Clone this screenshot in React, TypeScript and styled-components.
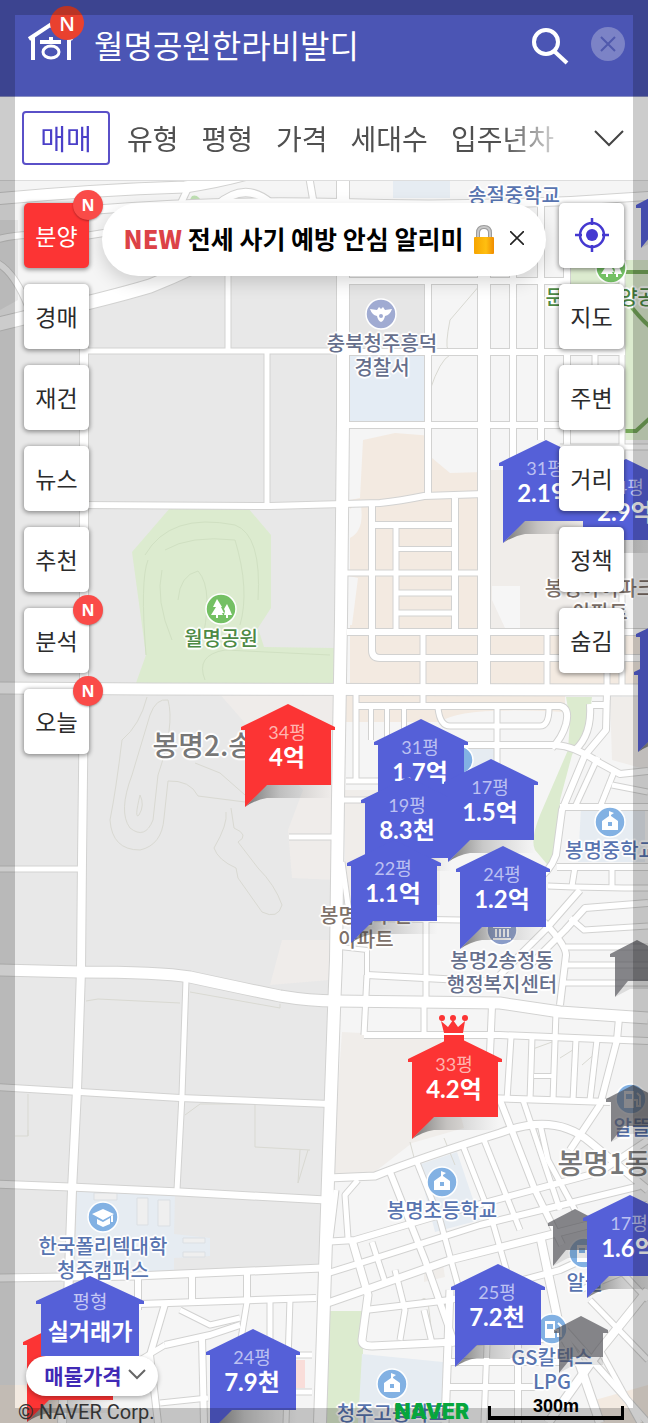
import React from "react";
import styled, { createGlobalStyle, css } from "styled-components";

const GlobalStyle = createGlobalStyle`
  * { box-sizing: border-box; }
  body { margin: 0; background: #e8e8e8; }
  button, input { font: inherit; color: inherit; border: 0; background: none; padding: 0; margin: 0; }
  button { cursor: pointer; }
`;

const Page = styled.div`
  position: relative;
  display: flex;
  flex-direction: column;
  min-height: 100vh;
  overflow: hidden;
  font-family: "Noto Sans CJK KR", sans-serif;
`;

const Header = styled.header`
  display: flex;
  align-items: center;
  height: 97px;
  padding: 0 23px 8px 28px;
  background: #4b55b4;
  border-bottom: 1px solid #8b90c4;
  color: #fff;
`;

const Logo = styled.a`
  position: relative;
  display: block;
  width: 46px;
  height: 60px;
  margin-right: 20px;
  svg { display: block; margin-top: 14px; overflow: visible; }
`;

const Badge = styled.span<{ $large?: boolean }>`
  position: absolute;
  display: flex;
  align-items: center;
  justify-content: center;
  border-radius: 50%;
  color: #fff;
  line-height: 1;
  ${(p) =>
    p.$large
      ? css`
          top: -8px;
          left: 22px;
          width: 34px;
          height: 34px;
          background: #e9412f;
          font: 600 20px "Open Sans", sans-serif;
        `
      : css`
          top: -13px;
          right: -14px;
          width: 30px;
          height: 30px;
          background: #fa4b48;
          font: 700 16px "Open Sans", sans-serif;
          box-shadow: 0 1px 2px rgba(0, 0, 0, 0.3);
        `}
`;

const SearchField = styled.input`
  flex: 1;
  min-width: 0;
  height: 48px;
  font-size: 32px;
  line-height: 48px;
  outline: none;
`;

const SearchButton = styled.button`
  display: flex;
  margin: 3px 22px 0 0;
`;

const ClearButton = styled.button`
  display: flex;
  align-items: center;
  justify-content: center;
  width: 34px;
  height: 34px;
  border-radius: 50%;
  background: #7c83c6;
`;

const FilterBar = styled.nav`
  display: flex;
  align-items: center;
  height: 84px;
  padding: 0 24px 2px 22px;
  background: #fff;
  border-bottom: 1px solid #ddd;
`;

const FilterList = styled.div`
  display: flex;
  align-items: center;
  flex: 1;
  gap: 23px;
  min-width: 0;
  margin-right: 38px;
  overflow: hidden;
  mask-image: linear-gradient(to right, #000 90%, transparent 103%);
`;

const Filter = styled.button<{ $active?: boolean }>`
  flex: none;
  height: 54px;
  font-size: 28px;
  line-height: 50px;
  color: #505050;
  ${(p) =>
    p.$active &&
    css`
      width: 88px;
      margin-right: -6px;
      color: #4a3fc8;
      border: 2px solid #5a50c8;
      border-radius: 4px;
    `}
`;

const IconButton = styled.button`
  display: flex;
`;

const MapArea = styled.main`
  position: relative;
  flex: 1;
  min-height: 1200px;
  overflow: hidden;
  background: #f5f5f5;
`;

const MapDrawing = styled.svg`
  position: absolute;
  inset: 0;
  width: 100%;
  height: 100%;
`;

const Controls = styled.div`
  position: relative;
  z-index: 2;
  display: flex;
  align-items: flex-start;
  padding: 22px 24px 0;
`;

const ControlColumn = styled.div`
  display: flex;
  flex-direction: column;
  gap: 16px;
`;

const ControlButton = styled.button<{ $hot?: boolean }>`
  position: relative;
  display: flex;
  align-items: center;
  justify-content: center;
  width: 65px;
  height: 65px;
  padding-bottom: 2px;
  border-radius: 5px;
  font-size: 23px;
  background: ${(p) => (p.$hot ? "#fc3434" : "#fff")};
  color: ${(p) => (p.$hot ? "#fff" : "#2b2b2b")};
  box-shadow: 0 1px 4px 1px rgba(0, 0, 0, 0.38);
`;

const Notice = styled.section`
  display: flex;
  align-items: center;
  justify-content: center;
  flex: 1;
  height: 73px;
  margin: 0 13px;
  padding-bottom: 4px;
  border-radius: 37px;
  background: #fff;
  color: #000;
  font-size: 25px;
  font-weight: 700;
  white-space: nowrap;
  box-shadow: 0 6px 18px rgba(0, 0, 0, 0.16);
  svg { flex: none; }
`;

const NoticeTag = styled.strong`
  margin-right: 6px;
  color: #dc4247;
`;

const LockIcon = styled.svg`
  margin: 4px 14px 0 9px;
`;

/* The map drawing starts at this row of the shared coordinate system. */
const ORIGIN_Y = 181;

const Pin = styled.button<{ $x: number; $y: number; $small?: boolean }>`
  position: absolute;
  left: ${(p) => p.$x - (p.$small ? 27 : 47)}px;
  top: ${(p) => p.$y - ORIGIN_Y}px;
  width: ${(p) => (p.$small ? 54 : 94)}px;
  height: ${(p) => (p.$small ? 58 : 104)}px;
  padding: 18px 2px 0 0;
  display: flex;
  flex-direction: column;
  align-items: center;
  color: #fff;
  font-family: Lato, "Noto Sans CJK KR", sans-serif;
  white-space: nowrap;
  svg { position: absolute; left: 0; top: 0; overflow: visible; }
`;

const PinArea = styled.span<{ $red?: boolean }>`
  position: relative;
  font-size: 18px;
  line-height: 20px;
  color: ${(p) => (p.$red ? "#ffb4b0" : "#bcc0f2")};
`;

const PinPrice = styled.span`
  position: relative;
  font-size: 24px;
  line-height: 30px;
  font-weight: 700;
`;

const Place = styled.span<{ $x: number; $y: number; $color: string; $big?: boolean }>`
  position: absolute;
  left: ${(p) => p.$x}px;
  top: ${(p) => p.$y - ORIGIN_Y}px;
  transform: translateX(-50%);
  text-align: center;
  white-space: pre;
  font-weight: 500;
  font-size: ${(p) => (p.$big ? 28 : 20)}px;
  line-height: ${(p) => (p.$big ? 32 : 24)}px;
  color: ${(p) => p.$color};
  text-shadow: 1px 1px 1px #fff, -1px -1px 1px #fff, 1px -1px 1px #fff, -1px 1px 1px #fff,
    0 2px 1px #fff, 0 -2px 1px #fff, 2px 0 1px #fff, -2px 0 1px #fff;
`;

const Legend = styled.div`
  position: absolute;
  z-index: 2;
  left: 26px;
  bottom: 27px;
  display: flex;
  flex-direction: column;
  align-items: center;
  width: 132px;
`;

const LegendHouse = styled.div`
  position: relative;
  display: flex;
  flex-direction: column;
  align-items: center;
  width: 108px;
  height: 80px;
  padding-top: 14px;
  margin-right: 4px;
  color: #fff;
  svg { position: absolute; left: 0; top: 0; }
`;

const LegendArea = styled.span`
  position: relative;
  font-size: 19px;
  line-height: 22px;
  color: #c4c7f4;
`;

const LegendPrice = styled.span`
  position: relative;
  font-size: 23px;
  line-height: 36px;
  font-weight: 700;
`;

const PriceToggle = styled.button`
  display: flex;
  align-items: center;
  justify-content: center;
  gap: 6px;
  width: 132px;
  height: 40px;
  padding: 0 6px 2px 12px;
  border-radius: 20px;
  background: #fff;
  color: #4029b5;
  font-size: 21px;
  font-weight: 700;
  box-shadow: 0 2px 5px rgba(0, 0, 0, 0.3);
`;

const Attribution = styled.footer`
  position: absolute;
  z-index: 5;
  left: 18px;
  right: 24px;
  bottom: 0;
  display: flex;
  align-items: flex-end;
`;

const Copyright = styled.small`
  flex: 1;
  font: 400 20px/22px Roboto, sans-serif;
  color: #333;
`;

const NaverLogo = styled.span`
  margin-right: 19px;
  font: 900 21px/23px Inter, sans-serif;
  color: #07a63c;
`;

const ScaleBar = styled.div`
  width: 136px;
  height: 26px;
  margin-bottom: 3px;
  padding-top: 2px;
  text-align: center;
  font: 700 18px/20px "Liberation Sans", sans-serif;
  color: #000;
  background: linear-gradient(#000, #000) left bottom / 3px 14px no-repeat,
    linear-gradient(#000, #000) right bottom / 3px 14px no-repeat,
    linear-gradient(#000, #000) left bottom / 100% 4px no-repeat;
`;

const EdgeShade = styled.div`
  position: absolute;
  inset: 0;
  z-index: 3;
  border: 15px solid rgba(0, 0, 0, 0.2);
  pointer-events: none;
`;

type Road = [string, number];

const roads: Road[] = [
  ["M343 170 L343 420 L341 620 L338 800 L336 960 L334 1010 L328 1180 L320 1423", 12],
  ["M84 300 V690 L82 860 L81 970 L77 1090 L72 1190 L68 1300 L62 1423", 8],
  ["M80 351 H340", 5], ["M80 505 L270 506 L380 503 Q400 501 424 496 L484 494", 6],
  ["M228 230 V350", 5], ["M267 352 V505", 5],
  ["M-5 688 L150 689 L648 690", 11],
  ["M-5 325 L40 314 Q110 298 150 286 Q210 262 245 238", 13],
  ["M-5 199 Q90 190 185 187 Q230 180 260 170", 11],
  ["M90 210 Q210 200 340 203 Q500 208 660 195", 8],
  ["M190 184 L180 205", 6], ["M216 206 Q245 180 272 204", 7], ["M308 170 L314 205", 6],
  ["M-5 240 Q30 230 60 240 L110 232 Q140 225 160 230", 6], ["M-5 262 Q15 270 32 316", 6],
  ["M346 281 H566", 6], ["M346 352 H484", 6], ["M484 352 H625", 6], ["M346 425 H566", 6], ["M560 447 H648", 5],
  ["M428 283 V496", 6], ["M484 205 L484 690", 12], ["M513 205 V470", 6], ["M541 205 V440", 6],
  ["M567 205 V447", 6], ["M595 352 V380", 5], ["M622 250 V690", 5],
  ["M372 505 V650 Q372 658 380 658 L648 658", 6], ["M374 525 H455", 6], ["M396 525 V632", 5],
  ["M455 498 V632", 6], ["M396 549 H455", 4], ["M347 573 H484", 5], ["M396 593 H455", 5], ["M396 613 H455", 5],
  ["M347 632 H648", 6], ["M423 632 V708", 5], ["M547 632 V690", 5], ["M607 658 V700", 5],
  ["M356 692 V782", 5], ["M356 706 H560 Q570 708 566 724 Q562 738 552 748", 6],
  ["M371 708 V740", 4], ["M387 708 V740", 4], ["M404 708 V740", 4], ["M438 708 Q440 726 450 726 H540 Q549 726 549 708", 5],
  ["M497 706 V775", 5], ["M460 745 H555 Q575 746 598 762 L620 774 L648 771", 6],
  ["M607 690 L606 730 L585 755 L562 810 L556 855 Q550 872 534 882 L500 905", 6],
  ["M592 705 L606 705", 6], ["M590 704 Q592 735 575 750", 6],
  ["M346 781 H385", 5], ["M340 800 H375", 5], ["M289 837 H336", 5],
  ["M560 807 H648", 6], ["M598 757 L575 807", 5], ["M614 772 L600 807", 5], ["M612 785 L648 792", 5],
  ["M557 867 H648", 6], ["M612 867 V888", 5], ["M548 886 Q600 888 648 888", 5], ["M575 867 L572 886", 5],
  ["M530 965 L565 930 L585 908 L648 903", 6], ["M500 975 L545 930 L580 890", 6],
  ["M570 918 L584 930 L648 926", 5], ["M544 922 Q566 945 566 955 L560 1005", 6],
  ["M566 947 H648", 5], ["M566 965 H648", 5], ["M562 983 H648", 5],
  ["M338 918 L460 920", 5], ["M426 908 V1005", 5], ["M367 975 L500 982", 6], ["M367 975 L364 1035", 5],
  ["M340 947 L367 950 V975", 4], ["M342 862 L350 920", 5],
  ["M-5 970 L80 972 Q160 972 190 977 Q250 990 280 996 Q310 1001 336 1001 L500 1003 L560 1012 L648 1018", 11],
  ["M-5 869 H80", 5], ["M186 980 L182 1095 L177 1190", 5],
  ["M-5 1087 L80 1092 L180 1098 L330 1104", 6], ["M-5 1184 L70 1187 L180 1192 L326 1200", 7],
  ["M-5 1278 L135 1276 L322 1268", 7],
  ["M364 1035 L500 1035 L648 1041", 6], ["M424 1006 V1035", 5], ["M492 1006 L488 1100", 6],
  ["M556 1012 L553 1100", 5], ["M619 1018 L617 1040 L600 1105 L570 1150", 6],
  ["M511 1037 L507 1100", 5], ["M532 1037 L530 1100", 5], ["M576 1039 L573 1100", 5], ["M597 1040 L590 1100", 5],
  ["M534 1076 H553", 4], ["M485 1098 L610 1102", 6],
  ["M328 1178 L375 1176 Q420 1158 500 1133 Q555 1112 590 1142 L648 1190", 7],
  ["M500 1100 L535 1190 L562 1245", 6], ["M523 1100 L560 1210", 5], ["M463 1146 L492 1220 L515 1300", 5],
  ["M484 1140 L520 1230", 5], ["M540 1124 L548 1160 L575 1210", 5], ["M416 1160 L440 1220 L462 1300", 5],
  ["M390 1172 L425 1260 L455 1345", 6], ["M358 1180 L345 1195 L348 1238", 5], ["M336 1190 L330 1240", 5],
  ["M322 1242 L355 1240 L440 1215 L600 1172 L648 1140", 6],
  ["M322 1275 L370 1260 L480 1225 L640 1186", 6], ["M322 1305 L365 1290 L450 1260 L600 1222 L648 1205", 7],
  ["M352 1240 L368 1295 L362 1340 Q362 1346 372 1346 L455 1342 L560 1338", 7],
  ["M372 1242 L386 1285", 5], ["M395 1270 L405 1310 L400 1340", 5], ["M365 1310 L450 1300 L560 1270 L648 1230", 6],
  ["M424 1310 L432 1343", 5], ["M450 1290 L445 1423", 7], ["M487 1345 L484 1423", 5], ["M518 1342 V1423", 6],
  ["M448 1362 H560", 6], ["M445 1387 H540", 6], ["M540 1235 L560 1330 L580 1365 L600 1423", 8],
  ["M648 1290 L600 1350 L548 1423", 8], ["M565 1330 L648 1423", 6], ["M590 1300 L648 1360", 5],
  ["M620 1270 L648 1300", 5], ["M580 1290 L648 1262", 5], ["M600 1350 L640 1423", 5],
  ["M138 1278 V1310", 6], ["M192 1276 V1300", 6], ["M247 1274 V1302", 6], ["M140 1304 L316 1298", 6],
  ["M247 1302 L240 1345", 5], ["M270 1300 V1360", 5], ["M290 1299 L286 1423", 5],
  ["M165 1304 L150 1355 L158 1423", 6], ["M165 1345 L210 1335 L240 1325", 6], ["M180 1310 L210 1325 L240 1318", 5],
  ["M202 1338 L204 1423", 6], ["M140 1360 L165 1345", 5], ["M160 1403 L208 1398", 5], ["M286 1355 H312", 5], ["M286 1392 H312", 5],
];

const contours = [
  "M147 697 Q140 725 122 740 Q116 790 110 820 Q112 850 140 850 Q162 845 164 818 L168 781 Q190 780 198 796 L245 802",
  "M168 700 Q156 698 150 715 L132 775 Q118 812 130 828 Q145 840 153 820 L158 775 Q175 725 168 700",
  "M226 812 Q228 824 214 848 Q218 860 236 868 L238 878 L262 912 Q278 920 282 905 Q275 885 258 868 L238 842 Q250 835 234 828 L231 808",
  "M140 795 Q134 820 139 815 Q145 805 140 795",
  "M195 763 L220 773 L245 795", "M86 1001 L98 999 L180 1003",
  "M190 992 L280 1008 V1004", "M28 1130 V1136 V1094 M15 1136 H28", "M185 1115 L200 1104 H255 V1147 L310 1150",
  "M300 1150 L298 1183 L308 1150",
  "M480 285 L450 320 Q445 345 448 350", "M430 390 Q440 360 450 355",
  "M530 1050 L552 1042 M560 1058 L576 1048 M582 1065 L597 1052", "M410 1142 L418 1173 M444 1138 L455 1165",
  "M420 1302 Q424 1295 428 1302 L432 1335",
];

const parkContours = [
  "M148 560 Q140 580 146 655 M145 555 Q170 512 235 525 Q262 535 258 600",
  "M165 550 Q190 535 235 540 Q250 590 240 625 M178 600 Q180 575 198 571 Q215 590 200 650 M162 570 Q155 600 172 640",
  "M205 680 Q195 655 225 650 L330 655",
];

function MapBackground() {
  return (
    <MapDrawing aria-hidden="true">
      <g transform={`translate(0 ${-ORIGIN_Y})`}>
        <path fill="#e8e8e8" d="M-5 322 Q130 295 200 262 L228 240 H340 V690 L336 1000 L322 1272 L100 1278 L90 1423 H-5Z" />
        <path fill="#efecea" d="M218 692 H336 L330 980 L270 985 L282 940 H336 V880 L292 878 L288 830 L303 790 Z" />
        <path fill="#e8e8e8" d="M0 310 V220 H18 V300 Z" />
        <rect x="350" y="285" width="75" height="64" fill="#e6e6e6" />
        <rect x="350" y="355" width="75" height="67" fill="#e4ecf4" />
        <path fill="#f3eae1" d="M363 440 L395 433 L484 440 V690 H350 V500 L360 498Z" />
        <path fill="#f5f5f5" d="M432 430 H484 V472 L450 473 L432 458Z M349 576 L358 578 L352 625 H349Z M349 510 L360 500 Q366 530 350 538Z" />
        <path fill="#f0edea" d="M490 470 H620 V630 H490Z M610 697 H648 V770 L612 760Z M345 790 H440 V905 H345Z" />
        <path fill="#f6f6f6" d="M492 586 H520 V628 H505 L492 600Z" />
        <path fill="#f3eae1" d="M490 635 H648 V685 H490Z M346 696 H565 V712 Q460 706 440 722 H346Z" />
        <path fill="#dcebcf" d="M170 508 H248 L271 535 V608 L258 628 L264 647 L334 648 V683 H136 L146 655 L132 552 Z" />
        <path fill="#dcebcf" d="M566 260 H648 V440 H625 V290 H566Z M566 697 H592 L588 725 L572 755 L560 800 Q558 860 552 870 L535 850 Q530 840 540 815 L568 750 L570 720Z M322 1311 H363 V1423 H318Z" />
        <path fill="#bfe0b3" d="M187 205 L192 196 Q198 193 204 205Z" />
        <path fill="none" stroke="#76a85a" strokeWidth="4" d="M624 272 H648 M626 300 Q645 325 655 330 M625 431 H636 L650 418" />
        <path fill="#e6ecf2" d="M77 1190 L175 1195 L174 1234 L210 1238 V1256 L174 1258 V1275 H75Z M362 1354 L443 1362 V1423 H358Z M418 1165 L457 1152 L480 1220 L435 1232Z M465 745 H495 V780 H465Z M581 808 H645 V862 H578Z M393 181 H450 V198 H393Z" />
        <path fill="#f0edea" d="M342 1032 L440 1037 L464 1128 L412 1143 L372 1174 L332 1173Z M424 1270 L443 1264 L445 1277 L424 1282Z" />
        <path fill="#f3eae1" d="M595 1400 L648 1385 V1423 H595Z M0 1385 H60 V1423 H0Z" />
        <path fill="#efefef" stroke="#dbdfe3" d="M94 1193 H117 V1200 H94Z M137 1198 H148 V1225 H137Z M158 1200 H170 V1226 H158Z M183 1238 H205 V1243 H183Z M183 1252 H205 V1257 H183Z" />
        <path fill="#f9ddd9" d="M292 1360 H305 V1388 H292Z" />
        <g fill="none" stroke="#d9d9d2" strokeWidth="1">
          {contours.map((d) => <path key={d} d={d} />)}
        </g>
        <g fill="none" stroke="#d0e0c2" strokeWidth="1">
          {parkContours.map((d) => <path key={d} d={d} />)}
        </g>
        <g fill="none" stroke="#d2d2d1" strokeLinejoin="round">
          {roads.map(([d, w]) => <path key={d} d={d} strokeWidth={w + 2} />)}
        </g>
        <g fill="none" stroke="#fff" strokeLinejoin="round">
          {roads.map(([d, w]) => <path key={d} d={d} strokeWidth={w} />)}
        </g>
        <g stroke="#fff" strokeWidth="1.5">
          {[[442, 1182], [610, 822], [392, 1384]].map(([x, y]) => (
            <g key={x} transform={`translate(${x} ${y})`}>
              <circle r="15" fill="#82b1e3" />
              <path fill="#fff" stroke="none" fillRule="evenodd" d="M-8 8 V-1 L-1 -6 V-11 L4 -9 L1 -7 V-6 L8 -1 V8Z M-2 0 V4 H2 V0Z" />
            </g>
          ))}
          <g transform="translate(381 314)">
            <circle r="15" fill="#a0abd2" />
            <path fill="#fff" stroke="none" fillRule="evenodd" d="M-11 -5 L-4 -4 L-2 -7 L0 -5 L2 -7 L4 -4 L11 -5 Q9 1 4 2 Q3 7 0 8 Q-3 7 -4 2 Q-9 1 -11 -5Z M-2 2 A2 2 0 1 0 2 2 A2 2 0 1 0 -2 2Z" />
          </g>
          {[[221, 609], [611, 268]].map(([x, y]) => (
            <g key={x} transform={`translate(${x} ${y})`}>
              <circle r="15" fill="#74c064" />
              <path fill="#fff" stroke="none" d="M-4 -10 L1 -2 H0 L3 4 H1 L2 6 H-3 V9 H-5 V6 H-10 L-5 -2 H-8Z M6 -5 L9 1 L11 6 H7 V9 H5 V6 H3 L4 2 L3 0Z" />
            </g>
          ))}
          <g transform="translate(103 1217)">
            <circle r="15" fill="#82b1e3" />
            <path fill="#fff" stroke="none" d="M0 -8 L11 -3 L0 3 L-11 -3Z M-6 2 L0 5 L7 1 V7 L0 10 L-6 7Z M8 -1 L10 -2 V5 H8Z" />
          </g>
          <g transform="translate(502 930)">
            <circle r="15" fill="#8a9cc8" />
            <path fill="#fff" stroke="none" d="M-9 -4 L0 -9 L9 -4V-2H-9Z M-7 -1h2v8h-2z M-3 -1h2v8h-2z M1 -1h2v8h-2z M5 -1h2v8h-2z M-9 8H9V10H-9Z" />
          </g>
          {[[552, 1329], [584, 1253], [631, 1099]].map(([x, y]) => (
            <g key={x} transform={`translate(${x} ${y})`}>
              <circle r="15" fill="#82b1e3" />
              <path fill="#fff" stroke="none" fillRule="evenodd" d="M-7 9 V-8 H3 V9Z M-5 -5 V0 H1 V-5Z" />
              <path fill="none" strokeWidth="2" d="M3 1 H6 V7 H9 V-3 L6 -6" />
            </g>
          ))}
          <circle cx="459" cy="760" r="14" fill="#82b1e3" />
        </g>
      </g>
    </MapDrawing>
  );
}

const INDIGO = "#5560d8";
const RED = "#fc3434";

function HousePin({ x, y, area, price, red, crown }: {
  x: number; y: number; area?: string; price?: string; red?: boolean; crown?: boolean;
}) {
  const fill = red ? RED : INDIGO;
  const id = `fade-${x}-${y}`;
  return (
    <Pin $x={x} $y={y} aria-label={`${area ?? ""} ${price ?? ""}`}>
      <svg width="94" height="104">
        <linearGradient id={id} x1="0" x2="1">
          <stop offset="0" stopColor="#333" stopOpacity="0.65" />
          <stop offset="0.4" stopColor="#555" stopOpacity="0.28" />
          <stop offset="1" stopColor="#777" stopOpacity="0" />
        </linearGradient>
        <path fill={`url(#${id})`} d="M4 103 L26 80 H91 V94 H26 Q14 96 4 103Z" />
        <path fill={fill} d="M47 0 L94 23 V26 H90 V81 H26 L4 103 V26 H0 V23Z" />
        {crown && (
          <g fill={fill}>
            <path fill="#fff" d="M35 -4 H57 V-1 H35Z" />
            <path d="M33 -15 L40 -9 L45 -16 L50 -9 L57 -15 L55 -3 H36Z M36 -1 H56 V6 H36Z" />
            <circle cx="34" cy="-18" r="3" /><circle cx="45" cy="-18" r="3" /><circle cx="57" cy="-18" r="3" />
          </g>
        )}
      </svg>
      <PinArea $red={red}>{area}</PinArea>
      <PinPrice>{price}</PinPrice>
    </Pin>
  );
}

function SmallPin({ x, y, color = "rgba(78,78,84,0.68)" }: { x: number; y: number; color?: string }) {
  return (
    <Pin $x={x} $y={y} $small aria-label="단지">
      <svg width="54" height="58">
        <path fill="rgba(0,0,0,0.1)" d="M5 57 L18 41 H49 V49 H20Z" />
        <path fill={color} d="M27 0 L54 14 V17 H49 V41 H18 L5 57 V17 H0 V14Z" />
      </svg>
    </Pin>
  );
}

const BLUE_TEXT = "#5874b0";
const SLATE = "#666f8c";
const BROWN = "#7d7068";

const places: { x: number; y: number; text: string; color: string; big?: boolean }[] = [
  { x: 514, y: 183, text: "송절중학교", color: BLUE_TEXT },
  { x: 382, y: 331, text: "충북청주흥덕\n경찰서", color: SLATE },
  { x: 221, y: 626, text: "월명공원", color: "#4d8a45" },
  { x: 610, y: 285, text: "문암생태양공원", color: "#4d8a45" },
  { x: 229, y: 728, text: "봉명2.송정동", color: "#777", big: true },
  { x: 600, y: 576, text: "봉명아이파크\n아파트", color: BROWN },
  { x: 366, y: 903, text: "봉명삼우빈\n아파트", color: BROWN },
  { x: 502, y: 948, text: "봉명2송정동\n행정복지센터", color: SLATE },
  { x: 611, y: 838, text: "봉명중학교", color: BLUE_TEXT },
  { x: 442, y: 1198, text: "봉명초등학교", color: BLUE_TEXT },
  { x: 103, y: 1234, text: "한국폴리텍대학\n청주캠퍼스", color: BLUE_TEXT },
  { x: 604, y: 1146, text: "봉명1동", color: "#777", big: true },
  { x: 632, y: 1115, text: "알뜰", color: BLUE_TEXT },
  { x: 585, y: 1270, text: "알뜰", color: BLUE_TEXT },
  { x: 552, y: 1345, text: "GS칼텍스\nLPG", color: BLUE_TEXT },
  { x: 392, y: 1401, text: "청주고등학교", color: BLUE_TEXT },
];

const leftItems = [
  { label: "분양", hot: true, isNew: true }, { label: "경매" }, { label: "재건" }, { label: "뉴스" },
  { label: "추천" }, { label: "분석", isNew: true }, { label: "오늘", isNew: true },
];
const rightItems = ["지도", "주변", "거리", "정책", "숨김"];
const filters = ["매매", "유형", "평형", "가격", "세대수", "입주년차"];

export default function App() {
  return (
    <Page>
      <GlobalStyle />
      <Header>
        <Logo href="#" aria-label="홈">
          <svg width="46" height="34" viewBox="0 0 46 34" fill="none" stroke="#fff" strokeWidth="4">
            <path d="M1 11 L22 -3 L45 11 M5 9 V32 M41 9 V32" />
            <path d="M12 14 H33 M23 9 V14" />
            <ellipse cx="23" cy="24" rx="8" ry="6" strokeWidth="3" />
          </svg>
          <Badge $large>N</Badge>
        </Logo>
        <SearchField aria-label="단지 검색" defaultValue="월명공원한라비발디" />
        <SearchButton aria-label="검색">
          <svg width="38" height="38" viewBox="0 0 38 38" fill="none" stroke="#fff" strokeWidth="4">
            <circle cx="15" cy="15" r="12" />
            <path d="M23 24 L36 36" />
          </svg>
        </SearchButton>
        <ClearButton aria-label="지우기">
          <svg width="16" height="16" viewBox="0 0 16 16" stroke="#5059ac" strokeWidth="2">
            <path d="M1 1 L15 15 M15 1 L1 15" />
          </svg>
        </ClearButton>
      </Header>

      <FilterBar>
        <FilterList>
          {filters.map((f, i) => <Filter key={f} $active={i === 0}>{f}</Filter>)}
        </FilterList>
        <IconButton aria-label="필터 더보기">
          <svg width="30" height="18" viewBox="0 0 30 18" fill="none" stroke="#444" strokeWidth="2">
            <path d="M1 2 L15 16 L29 2" />
          </svg>
        </IconButton>
      </FilterBar>

      <MapArea>
        <MapBackground />
        {places.map((p) => (
          <Place key={`${p.x}-${p.y}`} $x={p.x} $y={p.y} $color={p.color} $big={p.big}>{p.text}</Place>
        ))}
        <SmallPin x={663} y={191} color={INDIGO} />
        <SmallPin x={637} y={940} />
        <SmallPin x={633} y={1085} />
        <SmallPin x={575} y={1209} />
        <SmallPin x={581} y={1316} />
        <HousePin x={546} y={440} area="31평" price="2.1억" />
        <HousePin x={626} y={459} area="24평" price="2.9억" />
        <HousePin x={683} y={611} />
        <HousePin x={681} y={649} />
        <HousePin x={288} y={704} area="34평" price="4억" red />
        <HousePin x={421} y={719} area="31평" price="1.7억" />
        <HousePin x={408} y={777} area="19평" price="8.3천" />
        <HousePin x={491} y={759} area="17평" price="1.5억" />
        <HousePin x={394} y={840} area="22평" price="1.1억" />
        <HousePin x={503} y={846} area="24평" price="1.2억" />
        <HousePin x={455} y={1036} area="33평" price="4.2억" red crown />
        <HousePin x={630} y={1195} area="17평" price="1.6억" />
        <HousePin x={498} y={1264} area="25평" price="7.2천" />
        <HousePin x={253} y={1329} area="24평" price="7.9천" />
        <HousePin x={70} y={1319} red />

        <Controls>
          <ControlColumn>
            {leftItems.map((item) => (
              <ControlButton key={item.label} $hot={item.hot}>
                {item.label}
                {item.isNew && <Badge>N</Badge>}
              </ControlButton>
            ))}
          </ControlColumn>
          <Notice>
            <NoticeTag>NEW</NoticeTag>전세 사기 예방 안심 알리미
            <LockIcon width="24" height="32" viewBox="0 0 24 32" aria-hidden="true">
              <linearGradient id="lock" x1="0" x2="1">
                <stop offset="0" stopColor="#f6a400" /><stop offset="0.6" stopColor="#ffbf10" /><stop offset="1" stopColor="#f08c00" />
              </linearGradient>
              <path d="M6 15 V9 Q6 3 12 3 Q18 3 18 9 V15" fill="none" stroke="#9a9a9a" strokeWidth="4" />
              <path d="M6 15 V9 Q6 3 12 3 Q18 3 18 9 V15" fill="none" stroke="#c8c8c8" strokeWidth="2" />
              <rect x="2" y="13" width="20" height="17" rx="1" fill="url(#lock)" />
            </LockIcon>
            <IconButton aria-label="알림 닫기">
              <svg width="14" height="14" viewBox="0 0 14 14" stroke="#222" strokeWidth="1.6">
                <path d="M0 0 L14 14 M14 0 L0 14" />
              </svg>
            </IconButton>
          </Notice>
          <ControlColumn>
            <ControlButton aria-label="내 위치">
              <svg width="36" height="36" viewBox="0 0 36 36" fill="none" stroke="#4438d0" strokeWidth="2.5">
                <circle cx="18" cy="18" r="12" />
                <circle cx="18" cy="18" r="6" fill="#4438d0" stroke="none" />
                <path d="M18 1 V8 M18 28 V35 M1 18 H8 M28 18 H35" />
              </svg>
            </ControlButton>
            {rightItems.map((label) => <ControlButton key={label}>{label}</ControlButton>)}
          </ControlColumn>
        </Controls>

        <Legend>
          <LegendHouse>
            <svg width="108" height="80">
              <path fill={INDIGO} d="M54 0 L108 25 V28 H103 V80 H5 V28 H0 V25Z" />
            </svg>
            <LegendArea>평형</LegendArea>
            <LegendPrice>실거래가</LegendPrice>
          </LegendHouse>
          <PriceToggle>
            매물가격
            <svg width="18" height="12" viewBox="0 0 18 12" fill="none" stroke="#666" strokeWidth="2">
              <path d="M1 1 L9 9 L17 1" />
            </svg>
          </PriceToggle>
        </Legend>

        <Attribution>
          <Copyright>© NAVER Corp.</Copyright>
          <NaverLogo>NAVER</NaverLogo>
          <ScaleBar>300m</ScaleBar>
        </Attribution>
      </MapArea>
      <EdgeShade />
    </Page>
  );
}
